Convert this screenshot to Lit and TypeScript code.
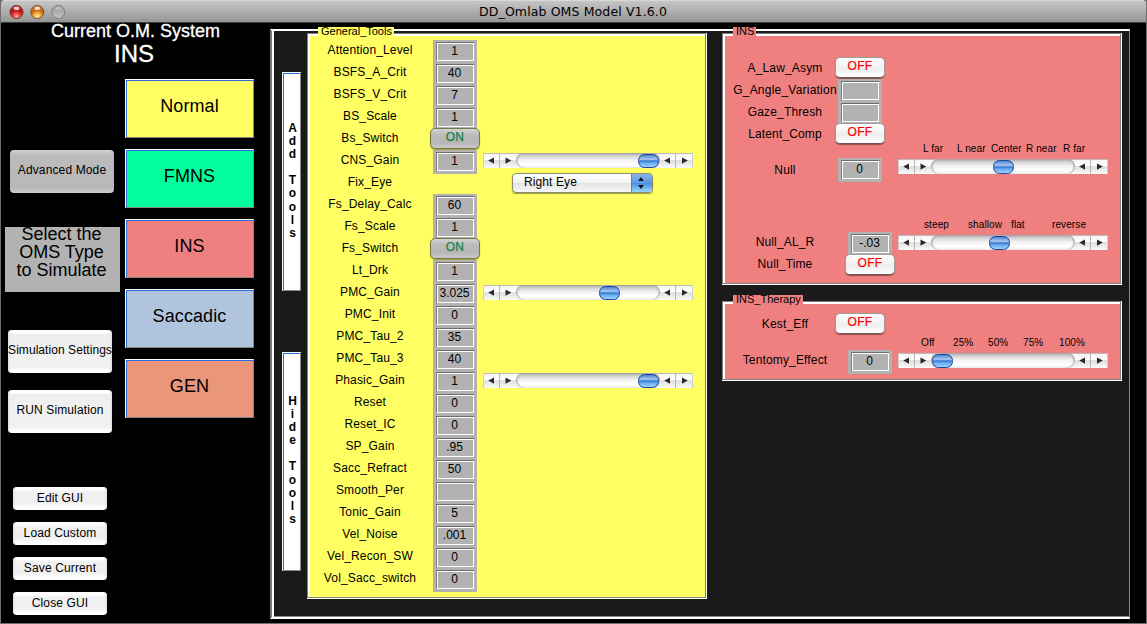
import { LitElement, html, css, svg, nothing } from "lit";
import { customElement, property } from "lit/decorators.js";

@customElement("scroll-slider")
class ScrollSlider extends LitElement {
  @property({ type: Number }) pos = 0;

  static styles = css`
    :host { display: block; width: 210px; height: 15px; }
    .bar { display: grid; grid-template-columns: 33px 144px 33px; height: 15px; background: linear-gradient(#f4f4f4, #fff 45%, #dedede 50%, #fafafa); box-shadow: inset 0 1px #bbb, inset 1px 0 #ccc, inset -1px 0 #ccc; }
    .track { border-radius: 8px; background: linear-gradient(#a2a2a2, #d4d4d4 20%, #f3f3f3 48%, #fff 75%, #f0f0f0); box-shadow: inset 2px 0 2px -1px #999, inset -2px 0 2px -1px #999; }
    .thumb { box-sizing: border-box; width: 21px; height: 14px; margin-top: 0.5px; border: 1.5px solid #1c459c; border-radius: 6.5px; background: linear-gradient(#4b83cf, #a9c8f1 36%, #3377cd 50%, #6aabef 66%, #9bd2ff); }
    svg { display: block; }
  `;

  arrows(left: boolean) {
    return html`<svg width="33" height="15" viewBox="0 0 33 15">
      ${left ? svg`<path d="M16.5 1V15" stroke="#b5b5b5"/>` : svg`<path d="M15.5 1V15" stroke="#b5b5b5"/>`}
      <path d=${left ? "M5.2 7.6L11 4.4V10.8Z" : "M4.2 7.6L10 4.4V10.8Z"} fill="#2b2b2b"/>
      <path d=${left ? "M28.3 7.6L22.5 4.4V10.8Z" : "M27.8 7.6L22 4.4V10.8Z"} fill="#2b2b2b"/>
    </svg>`;
  }

  render() {
    return html`<div class="bar">
      ${this.arrows(true)}
      <div class="track"><div class="thumb" style="margin-left:${this.pos - 33}px"></div></div>
      ${this.arrows(false)}
    </div>`;
  }
}

@customElement("value-field")
class ValueField extends LitElement {
  @property() value = "";

  static styles = css`
    :host { display: block; width: 44px; height: 24px; background: #b2b2b2; }
    .pad { padding: 2px 3px 3px; }
    .box { box-sizing: border-box; width: 38px; height: 19px; border: 1px solid #b2b2b2; border-top-color: #6c6c6c; border-left-color: #808080; border-right: 0; border-bottom: 0; }
    .inner { box-sizing: border-box; height: 18px; border: 1px solid #fff; font: 12px/15px "Liberation Sans", Arial, sans-serif; padding-right: 2px; white-space: nowrap; display: flex; justify-content: center; color: #000; }
  `;

  render() {
    return html`<div class="pad"><div class="box"><div class="inner">${this.value}</div></div></div>`;
  }
}

@customElement("toggle-switch")
class ToggleSwitch extends LitElement {
  @property({ type: Boolean }) on = false;

  static styles = css`
    :host { display: block; width: 50px; height: 22px; }
    .btn { box-sizing: border-box; width: 50px; height: 21px; border: 1px solid #a39a9a; border-bottom: 1.5px solid #6e5454; border-radius: 5px; background: linear-gradient(#fff, #f1f1f1 50%, #ececec 52%, #fff); color: #ff0000; font: 12px/16px "Liberation Sans", Arial, sans-serif; letter-spacing: 0.3px; text-align: center; box-shadow: 0 1px 1px #0006; -webkit-text-stroke: 0.2px; }
    .on { border-color: #77774c; background: linear-gradient(#d3d3d3, #bcbcbc 30%, #b6b6b6 70%, #c9c9c9); color: #108043; }
  `;

  render() {
    return html`<div class="btn ${this.on ? "on" : ""}">${this.on ? "ON" : "OFF"}</div>`;
  }
}

interface Row { label: string; value?: string; on?: boolean; slider?: number; eye?: boolean; }

const v = (label: string, value: string, slider?: number): Row => ({ label, value, slider });

const general: Row[] = [
  v("Attention_Level", "1"), v("BSFS_A_Crit", "40"), v("BSFS_V_Crit", "7"), v("BS_Scale", "1"),
  { label: "Bs_Switch", on: true }, v("CNS_Gain", "1", 155), { label: "Fix_Eye", eye: true },
  v("Fs_Delay_Calc", "60"), v("Fs_Scale", "1"), { label: "Fs_Switch", on: true }, v("Lt_Drk", "1"),
  v("PMC_Gain", "3.025", 115.5), v("PMC_Init", "0"), v("PMC_Tau_2", "35"), v("PMC_Tau_3", "40"),
  v("Phasic_Gain", "1", 155), v("Reset", "0"), v("Reset_IC", "0"), v("SP_Gain", ".95"),
  v("Sacc_Refract", "50"), v("Smooth_Per", ""), v("Tonic_Gain", "5"), v("Vel_Noise", ".001"),
  v("Vel_Recon_SW", "0"), v("Vol_Sacc_switch", "0"),
];

/* Each tick: text, left edge and width relative to the slider. */
type Tick = [string, number, number];
const nullTicks: Tick[] = [["L far", 25, 24], ["L near", 59, 31], ["Center", 93, 33], ["R near", 128, 32], ["R far", 165, 26]];
const alTicks: Tick[] = [["steep", 26, 30], ["shallow", 70, 36], ["flat", 113, 18], ["reverse", 154, 38]];
const tentTicks: Tick[] = [["Off", 23, 16], ["25%", 55, 18], ["50%", 90, 18], ["75%", 125, 18], ["100%", 161, 30]];

const types = [["Normal", "yellow"], ["FMNS", "green"], ["INS", "pink"], ["Saccadic", "blue"], ["GEN", "orange"]];

@customElement("app-root")
class AppRoot extends LitElement {
  static styles = css`
    :host { display: block; width: 1147px; height: 624px; overflow: hidden; background: #777; color: #000; font-family: "Liberation Sans", Arial, sans-serif; }
    .window { box-sizing: border-box; height: 624px; padding: 0 1px 1px; display: flex; flex-direction: column; background: #6e6e6e; }
    .titlebar { box-sizing: border-box; position: relative; height: 23px; border-top: 1px solid #d8d8d8; border-bottom: 1px solid #3e3e3e; border-radius: 4px 4px 0 0; background: linear-gradient(#c6c6c6, #959595); display: flex; align-items: center; justify-content: center; padding: 0 1px 0 0; font: 12.5px "DejaVu Sans", sans-serif; letter-spacing: 0.12px; }
    .lights { position: absolute; left: 7px; top: 3px; display: block; }
    .body { flex: 1; background: #000; display: flex; }
    .side { width: 269px; }
    .current { display: flow-root; height: 56px; color: #fff; text-align: center; font-size: 18px; line-height: 18px; -webkit-text-stroke: 0.3px #fff; }
    .current .om { margin-top: -1px; }
    .current .sys { font-size: 24px; line-height: 24px; padding: 2px 3px 0 0; }
    .cols { display: grid; grid-template-columns: 124px 129px; }
    .actions { display: flex; flex-direction: column; }
    .btn { box-sizing: border-box; width: 104px; height: 43px; border-radius: 4px; background: linear-gradient(#fff 0, #fff 7%, #eee 10%, #f2f2f2 88%, #fff 93%); box-shadow: inset 3px 0 2px -2px #ddd, inset -3px 0 2px -2px #ddd; display: flex; align-items: center; justify-content: center; font-size: 12px; white-space: nowrap; letter-spacing: 0.13px; padding-bottom: 3px; margin-left: 7px; }
    .adv { margin: 71px 0 34px 9px; background: linear-gradient(#d4d4d4 0, #c2c2c2 8%, #bbb 12%, #b8b8b8 88%, #cdcdcd); box-shadow: none; }
    .hint { width: 115px; height: 65px; margin: 0 0 38px 4px; background: #b2b2b2; font-size: 18px; line-height: 18px; text-align: center; white-space: pre; display: flow-root; }
    .hint p { margin: -2px 0 0 0; padding-right: 2px; }
    .run { margin-top: 17px; }
    .fit { letter-spacing: 0.06px; }
    .small { width: 94px; height: 23px; margin-left: 12px; padding-bottom: 1px; background: linear-gradient(#fff 0, #fff 12%, #f2f2f2 18%, #eee 65%, #fff 92%); }
    .smalls { display: flex; flex-direction: column; gap: 12px; margin-top: 54px; }
    .types { display: flex; flex-direction: column; gap: 11px; }
    .type { box-sizing: border-box; height: 59px; border: 1px solid #858585; border-top-color: #fff; border-left-color: #fff; box-shadow: inset 1px 1px #2d6fda; display: flex; align-items: center; justify-content: center; font-size: 18px; letter-spacing: 0.1px; padding-bottom: 5px; }
    .yellow { background-color: #ffff63; }
    .green { background-color: #00ff9c; }
    .pink { background-color: #f08080; }
    .blue { background-color: #b0c4de; }
    .orange { background-color: #e9967a; }
    .main { box-sizing: border-box; width: 860px; height: 590px; margin-top: 6px; border: solid; border-width: 2px 1px 2px 2px; border-color: #fff #8a8a8a #fff #777; box-shadow: inset 2px 0 #fff, inset 0 -1px #8a8a8a; background: #1a1a1a; display: flex; }
    .vtools { display: flex; flex-direction: column; gap: 61px; padding: 41px 0 0 10px; width: 25px; }
    .vbtn { box-sizing: border-box; width: 19px; height: 219px; border: 1px solid #858585; border-top-color: #fff; border-left-color: #fff; box-shadow: inset 1px 1px #2d6fda; background: #fff; font-weight: bold; font-size: 12px; line-height: 13.1px; text-align: center; padding: 49px 0 0 2px; }
    .vbtn + .vbtn { padding-top: 42px; }
    .letter { height: 13.1px; }
    .group { box-sizing: border-box; position: relative; border: solid; border-width: 3px 2px 2px 3px; border-color: #fff; }
    .group::before { content: ""; position: absolute; inset: -3px -1px -1px -3px; border: 1px solid #808080; pointer-events: none; }
    .legend { position: absolute; z-index: 1; left: 8px; top: -9px; height: 9px; padding: 0 0 0 3px; font-size: 11px; line-height: 9px; white-space: nowrap; box-sizing: border-box; }
    .general { width: 400px; height: 566px; margin: 2px 0 0 0; }
    .rows { padding-top: 4px; }
    .row { display: grid; grid-template-columns: 120px 50px 1fr; height: 22px; }
    .label { font-size: 12px; line-height: 20px; letter-spacing: 0.15px; text-align: center; white-space: nowrap; }
    .field { margin-left: 3px; }
    .ctl { padding: 3px 0 0 3px; }
    .select { box-sizing: border-box; margin: -2px 0 0 29px; width: 141px; height: 20px; border-radius: 4px; border: 1px solid #8b8b6d; background: linear-gradient(#fff, #f3f3f3 48%, #e3e3e3 52%, #f7f7f7); box-shadow: 0 1px 1px #0006; display: flex; justify-content: space-between; font-size: 12px; line-height: 17px; letter-spacing: 0.1px; padding-left: 11px; overflow: hidden; }
    .select svg { display: block; margin-top: -1px; }
    .right { margin: 2px 0 0 15px; width: 400px; display: flex; flex-direction: column; gap: 16px; }
    .ins { height: 252px; }
    .therapy { height: 80px; }
    .irow { display: grid; grid-template-columns: 110px 63px 1fr; height: 22px; }
    .irow .label { margin: 0 -8px 0 2px; width: 116px; }
    .wide { letter-spacing: 0.22px; }
    .sw { margin-top: -1px; }
    .c3 { margin-left: 3px; }
    .c10 { margin-left: 10px; }
    .c13 { margin-left: 13px; }
    .sl { margin-top: 1px; }
    .sl3 { margin-top: 3px; }
    .ticks { display: grid; height: 12px; margin-left: 173px; font-size: 10px; line-height: 14px; letter-spacing: 0.1px; }
    .tick { grid-area: 1 / 1; white-space: nowrap; }
    .first { padding-top: 22px; }
    .up { margin-top: -4px; }
    .n { margin-top: 4px; }
    .gap { margin-top: 38px; }
    .a { margin-top: 2px; }
    .t1 { margin: 10px 0 0; }
    .tall { line-height: 24px; }
    .w76 { width: 76px; }
    .w23 { width: 23px; }
    .w70 { width: 70px; }
  `;

  vertical(text: string) {
    return html`<div class="vbtn">${[...text].map((c) => html`<div class="letter">${c}</div>`)}</div>`;
  }

  ticks(list: Tick[]) {
    return html`<div class="ticks">${list.map(([t, x, w]) => html`<span class="tick" style="margin-left:${x}px;width:${w}px">${t}</span>`)}</div>`;
  }

  generalRow(r: Row) {
    return html`<div class="row">
      <div class="label">${r.label}</div>
      <div>${r.on ? html`<toggle-switch on></toggle-switch>` : r.value !== undefined ? html`<value-field class="field" .value=${r.value}></value-field>` : nothing}</div>
      <div class="ctl">${r.slider !== undefined ? html`<scroll-slider .pos=${r.slider}></scroll-slider>` : nothing}
        ${r.eye ? html`<div class="select"><span>Right Eye</span><svg width="21" height="20" viewBox="0 0 21 20">
          <defs><linearGradient id="g" x2="0" y2="1"><stop stop-color="#8fb8e8"/><stop offset=".48" stop-color="#5b9be4"/><stop offset=".52" stop-color="#4a90e0"/><stop offset="1" stop-color="#a5dcff"/></linearGradient></defs>
          <rect width="21" height="20" fill="url(#g)"/><path d="M0.5 0V20" stroke="#5c84b4"/><path d="M10 4L12.8 8H7.2ZM10 16L12.8 12H7.2Z" fill="#111"/></svg></div>` : nothing}
      </div>
    </div>`;
  }

  render() {
    return html`<div class="window">
      <div class="titlebar">
        <svg class="lights" width="60" height="16" viewBox="0 0 60 16">
          <defs>
            <radialGradient id="r" cy=".85"><stop stop-color="#ffaaa0"/><stop offset=".6" stop-color="#ea3b36"/><stop offset="1" stop-color="#b31a1d"/></radialGradient>
            <radialGradient id="y" cy=".85"><stop stop-color="#ffee91"/><stop offset=".6" stop-color="#f3a63c"/><stop offset="1" stop-color="#c56a17"/></radialGradient>
            <linearGradient id="n" x2="0" y2="1"><stop stop-color="#989898"/><stop offset="1" stop-color="#c4c4c4"/></linearGradient>
          </defs>
          <circle cx="8.5" cy="8" r="6.5" fill="url(#r)" stroke="#813030"/><ellipse cx="8.5" cy="4.2" rx="3" ry="1.8" fill="#fff" opacity=".75"/>
          <circle cx="29.3" cy="8" r="6.5" fill="url(#y)" stroke="#855324"/><ellipse cx="29.3" cy="4.2" rx="3" ry="1.8" fill="#fff" opacity=".75"/>
          <circle cx="50.3" cy="8" r="6.5" fill="url(#n)" stroke="#7d7d7d"/><ellipse cx="50.3" cy="4.2" rx="3" ry="1.6" fill="#fff" opacity=".3"/>
        </svg>
        <span>DD_Omlab OMS Model V1.6.0</span>
      </div>
      <div class="body">
        <div class="side">
          <div class="current"><div class="om">Current O.M. System</div><div class="sys">INS</div></div>
          <div class="cols">
            <div class="actions">
              <div class="btn adv">Advanced Mode</div>
              <div class="hint"><p>Select the
OMS Type
to Simulate</p></div>
              <div class="btn fit">Simulation Settings</div>
              <div class="btn run">RUN Simulation</div>
              <div class="smalls">${["Edit GUI", "Load Custom", "Save Current", "Close GUI"].map((t) => html`<div class="btn small">${t}</div>`)}</div>
            </div>
            <div class="types">${types.map(([t, c]) => html`<div class="type ${c}">${t}</div>`)}</div>
          </div>
        </div>
        <div class="main">
          <div class="vtools">${this.vertical("Add Tools")}${this.vertical("Hide Tools")}</div>
          <div class="group general yellow">
            <div class="legend yellow w76">General_Tools</div>
            <div class="rows">${general.map((r) => this.generalRow(r))}</div>
          </div>
          <div class="right">
            <div class="group ins pink">
              <div class="legend pink w23">INS</div>
              <div class="first">
                <div class="irow"><div class="label">A_Law_Asym</div><toggle-switch class="sw"></toggle-switch></div>
                <div class="irow"><div class="label wide">G_Angle_Variation</div><value-field class="c3 sw"></value-field></div>
                <div class="irow"><div class="label">Gaze_Thresh</div><value-field class="c3 sw"></value-field></div>
                <div class="irow"><div class="label">Latent_Comp</div><toggle-switch class="sw"></toggle-switch></div>
              </div>
              <div class="up">${this.ticks(nullTicks)}</div>
              <div class="irow n"><div class="label tall">Null</div><value-field class="c3" value="0"></value-field><scroll-slider class="sl" .pos=${94.5}></scroll-slider></div>
              <div class="gap">${this.ticks(alTicks)}</div>
              <div class="irow a"><div class="label">Null_AL_R</div><value-field class="c13" value="-.03"></value-field><scroll-slider class="sl3" .pos=${90.5}></scroll-slider></div>
              <div class="irow"><div class="label">Null_Time</div><toggle-switch class="c10"></toggle-switch></div>
            </div>
            <div class="group therapy pink">
              <div class="legend pink w70">INS_Therapy</div>
              <div class="irow t1"><div class="label">Kest_Eff</div><toggle-switch class="sw"></toggle-switch></div>
              ${this.ticks(tentTicks)}
              <div class="irow a"><div class="label">Tentomy_Effect</div><value-field class="c13" value="0"></value-field><scroll-slider class="sl3" .pos=${33.5}></scroll-slider></div>
            </div>
          </div>
        </div>
      </div>
    </div>`;
  }
}
